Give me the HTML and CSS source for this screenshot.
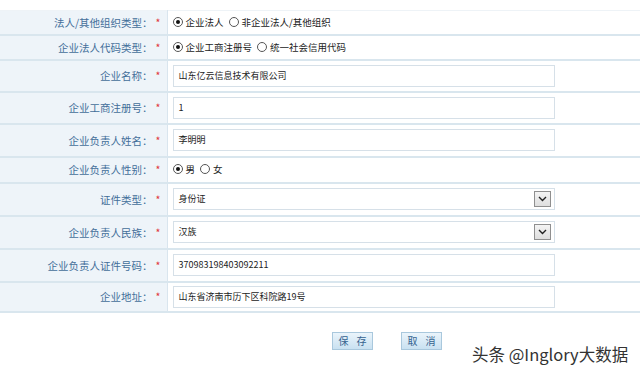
FILE: index.html
```html
<!DOCTYPE html>
<html lang="zh-CN">
<head>
    <meta charset="UTF-8">
    <title>企业信息</title>
    <link rel="stylesheet" href="styles.css">
</head>
<body>
    <table class="form-table">
        <tr class="row-radio">
            <td class="label">法人/其他组织类型：<span class="req">*</span></td>
            <td class="value">
                <label class="radio"><span class="dot checked"></span>企业法人</label>
                <label class="radio"><span class="dot"></span>非企业法人/其他组织</label>
            </td>
        </tr>
        <tr class="row-radio tall">
            <td class="label">企业法人代码类型：<span class="req">*</span></td>
            <td class="value">
                <label class="radio"><span class="dot checked"></span>企业工商注册号</label>
                <label class="radio"><span class="dot"></span>统一社会信用代码</label>
            </td>
        </tr>
        <tr class="row-input">
            <td class="label">企业名称：<span class="req">*</span></td>
            <td class="value"><div class="field">山东亿云信息技术有限公司</div></td>
        </tr>
        <tr class="row-input">
            <td class="label">企业工商注册号：<span class="req">*</span></td>
            <td class="value"><div class="field">1</div></td>
        </tr>
        <tr class="row-input big">
            <td class="label">企业负责人姓名：<span class="req">*</span></td>
            <td class="value"><div class="field">李明明</div></td>
        </tr>
        <tr class="row-radio sex">
            <td class="label">企业负责人性别：<span class="req">*</span></td>
            <td class="value">
                <label class="radio"><span class="dot checked"></span>男</label>
                <label class="radio"><span class="dot"></span>女</label>
            </td>
        </tr>
        <tr class="row-input big">
            <td class="label">证件类型：<span class="req">*</span></td>
            <td class="value">
                <div class="field select">身份证
                    <span class="arrow"><svg width="9" height="6" viewBox="0 0 9 6"><path d="M1 1 L4.5 4.5 L8 1" fill="none" stroke="#222" stroke-width="1.4"/></svg></span>
                </div>
            </td>
        </tr>
        <tr class="row-input big">
            <td class="label">企业负责人民族：<span class="req">*</span></td>
            <td class="value">
                <div class="field select">汉族
                    <span class="arrow"><svg width="9" height="6" viewBox="0 0 9 6"><path d="M1 1 L4.5 4.5 L8 1" fill="none" stroke="#222" stroke-width="1.4"/></svg></span>
                </div>
            </td>
        </tr>
        <tr class="row-input big">
            <td class="label">企业负责人证件号码：<span class="req">*</span></td>
            <td class="value"><div class="field">370983198403092211</div></td>
        </tr>
        <tr class="row-input last">
            <td class="label">企业地址：<span class="req">*</span></td>
            <td class="value"><div class="field">山东省济南市历下区科院路19号</div></td>
        </tr>
    </table>

    <div class="buttons">
        <button class="btn">保 存</button>
        <button class="btn">取 消</button>
    </div>

    <div class="watermark">头条 @Inglory大数据</div>
</body>
</html>
```

FILE: styles.css
```css
* {
    margin: 0;
    padding: 0;
    box-sizing: border-box;
}
body {
    font-family: "Noto Sans CJK SC", "Noto Sans", sans-serif;
    font-size: 9px;
    background: white;
    color: #222;
    width: 640px;
    height: 375px;
    overflow: hidden;
    position: relative;
}
.form-table {
    width: 100%;
    margin-top: 10px;
    border-collapse: collapse;
    border-top: 1px solid #dbe7ef;
}
.form-table td {
    border-bottom: 2px solid #d9e6ee;
    border-top: 1px solid #eef3f7;
    vertical-align: middle;
}
.label {
    width: 167px;
    background: #eef4f9;
    color: #436f9a;
    font-size: 10.5px;
    text-align: right;
    padding-right: 6px;
    border-right: 1px solid #d9e5ee;
    white-space: nowrap;
}
.req {
    color: #e0393b;
    margin-left: 3px;
}
.value {
    padding-left: 5px;
    background: white;
}
.row-radio td { height: 24px; }
.row-radio.tall td { height: 25px; }
.row-radio.sex td { height: 26px; }
.row-input td { height: 32px; }
.row-input.big td { height: 33px; }
.row-input.last td { height: 30px; }

.radio {
    display: inline-flex;
    align-items: center;
    margin-right: 3px;
    font-size: 9.5px;
    color: #222;
}
.dot {
    width: 10px;
    height: 10px;
    border: 1px solid #555;
    border-radius: 50%;
    margin-right: 3px;
    position: relative;
    background: white;
}
.dot.checked::after {
    content: "";
    position: absolute;
    left: 2px;
    top: 2px;
    width: 4px;
    height: 4px;
    border-radius: 50%;
    background: #111;
}
.field {
    width: 382px;
    height: 22px;
    border: 1px solid #d6e0e8;
    line-height: 20px;
    padding-left: 5px;
    color: #222;
    position: relative;
    background: white;
}
.arrow {
    position: absolute;
    right: 3px;
    top: 2px;
    width: 17px;
    height: 16px;
    border: 1px solid #8f8f8f;
    background: linear-gradient(#f4f4f4, #dedede);
    display: flex;
    align-items: center;
    justify-content: center;
}
.buttons {
    display: flex;
    gap: 28px;
    margin-top: 19px;
    padding-left: 332px;
}
.btn {
    width: 41px;
    height: 18px;
    border: 1px solid #a9c8dd;
    background: linear-gradient(#eaf4fb, #c9e1f1);
    color: #35628f;
    font-family: "Noto Sans CJK SC", sans-serif;
    font-size: 10px;
    letter-spacing: 3px;
    padding-left: 3px;
    line-height: 16px;
}
.watermark {
    position: absolute;
    left: 472px;
    top: 342px;
    font-size: 16.5px;
    color: #333;
    font-family: "Noto Sans CJK SC", sans-serif;
}
```
